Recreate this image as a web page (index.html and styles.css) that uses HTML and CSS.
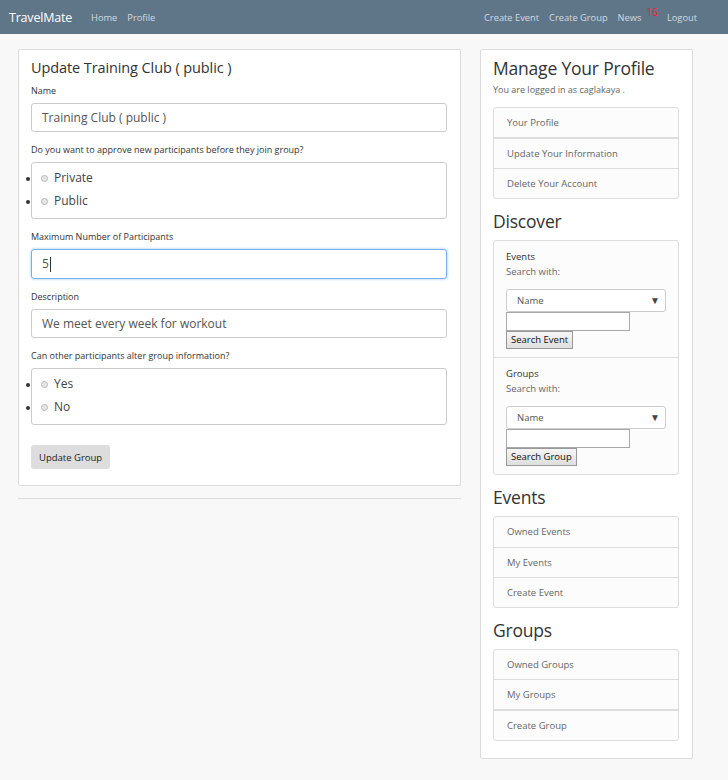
FILE: index.html
```html
<!DOCTYPE html>
<html>
<head>
<meta charset="utf-8">
<link rel="stylesheet" href="styles.css">
</head>
<body>
<nav class="navbar">
  <div class="nav-left">
    <span class="brand">TravelMate</span>
    <a class="nav-link">Home</a>
    <a class="nav-link">Profile</a>
  </div>
  <div class="nav-right">
    <a class="nav-link">Create Event</a>
    <a class="nav-link">Create Group</a>
    <a class="nav-link news">News<sup class="badge">16</sup></a>
    <a class="nav-link">Logout</a>
  </div>
</nav>
<main class="page">
  <section class="main-col">
    <div class="card form-card">
      <h2 class="form-title">Update Training Club ( public )</h2>
      <label class="label">Name</label>
      <div class="input">Training Club ( public )</div>
      <label class="label">Do you want to approve new participants before they join group?</label>
      <ul class="radio-box">
        <li class="radio-item"><span class="radio"></span>Private</li>
        <li class="radio-item"><span class="radio"></span>Public</li>
      </ul>
      <label class="label">Maximum Number of Participants</label>
      <div class="input focused">5<span class="caret"></span></div>
      <label class="label">Description</label>
      <div class="input">We meet every week for workout</div>
      <label class="label">Can other participants alter group information?</label>
      <ul class="radio-box">
        <li class="radio-item"><span class="radio"></span>Yes</li>
        <li class="radio-item"><span class="radio"></span>No</li>
      </ul>
      <button class="btn">Update Group</button>
    </div>
    <hr class="rule">
  </section>
  <aside class="side-col">
    <div class="card side-card">
      <h3 class="side-title">Manage Your Profile</h3>
      <p class="logged">You are logged in as caglakaya .</p>
      <div class="list">
        <div class="list-item">Your Profile</div>
        <div class="list-item thick">Update Your Information</div>
        <div class="list-item">Delete Your Account</div>
      </div>
      <h3 class="side-title sec">Discover</h3>
      <div class="discover">
        <div class="disc-block">
          <div class="disc-name">Events</div>
          <div class="disc-sub">Search with:</div>
          <div class="select">Name<span class="arrow">▼</span></div>
          <div class="plain-input"></div>
          <button class="plain-btn">Search Event</button>
        </div>
        <div class="disc-block">
          <div class="disc-name">Groups</div>
          <div class="disc-sub">Search with:</div>
          <div class="select">Name<span class="arrow">▼</span></div>
          <div class="plain-input"></div>
          <button class="plain-btn">Search Group</button>
        </div>
      </div>
      <h3 class="side-title sec">Events</h3>
      <div class="list">
        <div class="list-item tall">Owned Events</div>
        <div class="list-item">My Events</div>
        <div class="list-item">Create Event</div>
      </div>
      <h3 class="side-title sec">Groups</h3>
      <div class="list">
        <div class="list-item">Owned Groups</div>
        <div class="list-item">My Groups</div>
        <div class="list-item thick">Create Group</div>
      </div>
    </div>
  </aside>
</main>
</body>
</html>
```

FILE: styles.css
```css
* { box-sizing: border-box; }
html, body { margin: 0; padding: 0; }
body {
  background: #f8f8f8;
  font-family: "Open Sans", "Noto Sans", sans-serif;
  color: #333;
  width: 728px;
  height: 780px;
  overflow: hidden;
}
.navbar {
  height: 34px;
  background: #5f7588;
  display: flex;
  align-items: center;
  justify-content: space-between;
  padding: 0 31px 0 9px;
}
.nav-left, .nav-right { display: flex; align-items: center; }
.brand { color: #fff; font-size: 12.5px; margin-right: 19px; letter-spacing: -0.2px; }
.nav-link { color: #d2dae1; font-size: 9.3px; margin-right: 10px; }
.nav-right .nav-link { margin-right: 0; margin-left: 10px; }
.news { position: relative; }
.badge { color: #ff1a1a; font-size: 10px; position: relative; top: -4px; margin-left: 5px; margin-right: -1px; vertical-align: top; line-height: 1; }
.page {
  display: flex;
  align-items: flex-start;
  padding: 15px 0 0 18px;
  gap: 19px;
}
.main-col { width: 443px; }
.side-col { width: 213px; }
.card {
  background: #fff;
  border: 1px solid #dcdcdc;
  border-radius: 2px;
}
.form-card { padding: 8px 13px 16px 12px; display: flex; flex-direction: column; align-items: flex-start; }
.form-title { font-size: 14.5px; font-weight: 400; margin: 0 0 7px; color: #333; letter-spacing: -0.1px; }
.label { font-size: 9px; color: #333; margin-bottom: 6px; display: block; }
.input {
  width: 100%;
  height: 29px;
  border: 1px solid #ccc;
  border-radius: 3px;
  padding: 0 10px;
  font-size: 12px;
  line-height: 27px;
  color: #555;
  margin-bottom: 11px;
}
.input.focused {
  border-color: #74b1ea;
  box-shadow: 0 0 3px rgba(102, 175, 233, 0.7);
  height: 30px;
  line-height: 28px;
}
.caret { display: inline-block; width: 1px; height: 15px; background: #333; vertical-align: middle; margin-left: 1px; }
.radio-box {
  width: 100%;
  height: 57px;
  border: 1px solid #ccc;
  border-radius: 3px;
  margin: 0 0 11px;
  padding: 3px 0 0 8px;
  list-style: disc;
  list-style-position: outside;
}
.radio-item {
  font-size: 12px;
  color: #444;
  height: 23px;
  line-height: 23px;
  margin-left: 0;
}
.radio-item::marker { color: #333; font-size: 10px; }
.radio {
  display: inline-block;
  width: 7px;
  height: 7px;
  border-radius: 50%;
  border: 1px solid #b8b8b8;
  background: #e6e6e6;
  margin-right: 6px;
  margin-left: 1px;
  vertical-align: 0;
}
.btn {
  margin-top: 9px;
  background: #dddddd;
  border: none;
  border-radius: 3px;
  font-family: inherit;
  font-size: 9.5px;
  color: #222;
  height: 24px;
  padding: 0 8px;
}
.rule {
  border: 0;
  border-top: 1px solid #dcdcdc;
  margin: 12px 0 0;
}
.side-card { padding: 6px 13px 17px 12px; }
.side-title { font-size: 17.5px; font-weight: 500; margin: 0; color: #333; line-height: 24px; letter-spacing: -0.2px; }
.side-title.sec { margin-top: 10px; margin-bottom: 7px; }
.logged { font-size: 9px; color: #666; margin: 3px 0 11px; }
.list {
  border: 1px solid #ddd;
  border-radius: 3px;
  background: #fcfcfc;
}
.list-item {
  height: 30px;
  line-height: 29px;
  padding-left: 13px;
  font-size: 9.5px;
  color: #666;
  border-top: 1px solid #ddd;
}
.list-item:first-child { border-top: 0; height: 29px; }
.list-item.tall { height: 30px; }
.list-item.thick { height: 31px; border-top-width: 2px; }
.discover {
  border: 1px solid #ddd;
  border-radius: 3px;
  background: #fcfcfc;
}
.disc-block { padding: 9px 12px 8px; }
.disc-block + .disc-block { border-top: 1px solid #ddd; padding-bottom: 8px; }
.disc-name { font-size: 9.5px; color: #333; line-height: 13px; }
.disc-sub { font-size: 9.5px; color: #666; line-height: 13px; margin-top: 2px; margin-bottom: 11px; }
.select {
  width: 160px;
  height: 23px;
  border: 1px solid #ccc;
  border-radius: 3px;
  background: #fff;
  font-size: 9.5px;
  color: #555;
  line-height: 21px;
  padding-left: 10px;
  display: flex;
  justify-content: space-between;
}
.arrow { font-size: 10px; color: #444; padding-right: 5px; }
.plain-input {
  width: 124px;
  height: 19px;
  border: 1px solid #a9a9a9;
  background: #fff;
}
.plain-btn {
  display: block;
  height: 18px;
  border: 1px solid #999;
  background: linear-gradient(#f6f6f6, #dedede);
  font-family: inherit;
  font-size: 9.5px;
  color: #111;
  padding: 0 4px;
  line-height: 16px;
}
```
